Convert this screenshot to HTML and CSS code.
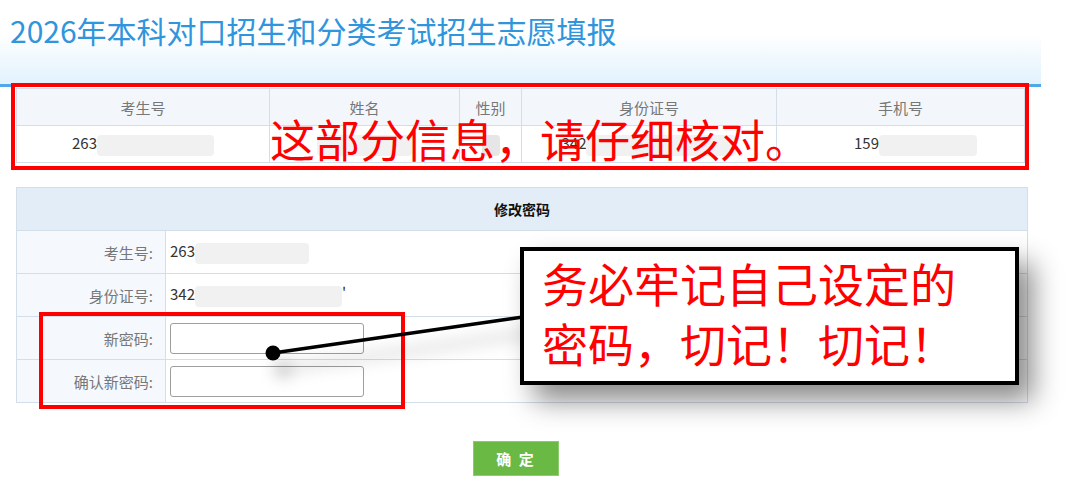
FILE: index.html
```html
<!doctype html>
<html lang="zh-CN">
  <head>
    <meta charset="UTF-8" />
    <title>2026年本科对口招生和分类考试招生志愿填报</title>
    <link rel="stylesheet" href="styles.css">
  </head>
  <body>
    <div class="header">
      <h1 class="title">2026年本科对口招生和分类考试招生志愿填报</h1>
    </div>

    <div class="info">
      <table class="info-table">
        <colgroup>
          <col class="c-no" />
          <col class="c-name" />
          <col class="c-sex" />
          <col class="c-id" />
          <col class="c-tel" />
        </colgroup>
        <tr>
          <th>考生号</th>
          <th>姓名</th>
          <th>性别</th>
          <th>身份证号</th>
          <th>手机号</th>
        </tr>
        <tr>
          <td>263<span class="mask m-no"></span></td>
          <td><span class="mask m-name"></span></td>
          <td><span class="mask m-sex"></span></td>
          <td>342<span class="mask m-id"></span></td>
          <td class="tel-cell">159<span class="mask m-tel"></span></td>
        </tr>
      </table>
    </div>

    <div class="form">
      <table class="form-table">
        <colgroup>
          <col class="c-label" />
          <col />
        </colgroup>
        <tr>
          <th colspan="2">修改密码</th>
        </tr>
        <tr>
          <td class="label">考生号:</td>
          <td class="value">263<span class="mask m-fno"></span></td>
        </tr>
        <tr>
          <td class="label">身份证号:</td>
          <td class="value">342<span class="mask m-fid"></span>'</td>
        </tr>
        <tr>
          <td class="label">新密码:</td>
          <td class="value"><input type="password" class="pwd" /></td>
        </tr>
        <tr>
          <td class="label">确认新密码:</td>
          <td class="value"><input type="password" class="pwd" /></td>
        </tr>
      </table>
      <div class="actions">
        <button class="btn-ok">确 定</button>
      </div>
    </div>

    <!-- annotations drawn over the page -->
    <div class="mark mark-info"></div>
    <div class="note-info">这部分信息，请仔细核对。</div>
    <div class="mark mark-pwd"></div>
    <svg class="pointer" width="1080" height="496" viewBox="0 0 1080 496">
      <line x1="273" y1="353" x2="523" y2="317" stroke="#000" stroke-width="3.5" />
      <circle cx="273" cy="353" r="7.5" fill="#000" />
    </svg>
    <div class="callout">务必牢记自己设定的<br />密码，切记！切记！</div>
  </body>
</html>
```

FILE: styles.css
```css
html,
body {
  margin: 0;
  background: #fff;
}
body {
  position: relative;
  width: 1080px;
  height: 496px;
  overflow: hidden;
  font-family: 'Noto Sans CJK SC', 'Noto Sans', sans-serif;
  color: #333;
}
.header {
  width: 1041px;
  height: 84px;
  background: linear-gradient(#fff 0%, #fff 40%, #e1f2fd 100%);
  border-bottom: 3px solid #4ea8e9;
}
.title {
  margin: 0;
  padding: 11px 0 0 10px;
  font-size: 30px;
  line-height: 38px;
  font-weight: 400;
  color: #2f95dc;
}
.info {
  padding: 1px 0 0 16px;
}
table {
  border-collapse: collapse;
  table-layout: fixed;
}
.info-table {
  width: 1008px;
}
.info-table th,
.info-table td {
  border: 1px solid #d3deeb;
  height: 36px;
  padding: 0;
  text-align: center;
  font-size: 15px;
  white-space: nowrap;
}
.info-table th {
  background: #f3f7fc;
  color: #777;
  font-weight: 400;
}
.info-table td {
  color: #333;
  vertical-align: middle;
}
.c-no { width: 253px; }
.c-name { width: 190px; }
.c-sex { width: 62px; }
.c-id { width: 255px; }
.c-tel { width: 248px; }
.info-table .tel-cell {
  padding-left: 30px;
}
.mask {
  display: inline-block;
  height: 21px;
  vertical-align: middle;
  background: #f1f1f1;
  border-radius: 4px;
}
.m-no { width: 117px; }
.m-name { width: 95px; }
.m-sex { width: 18px; background: #e6e6e6; }
.m-id { width: 150px; }
.m-tel { width: 98px; }
.m-fno { width: 114px; }
.m-fid { width: 147px; }

.form {
  padding: 24px 0 0 16px;
}
.form-table {
  width: 1012px;
}
.c-label { width: 149px; }
.form-table th {
  height: 42px;
  padding: 0;
  background: #e3edf7;
  border: 1px solid #d3deeb;
  font-size: 14px;
  font-weight: 700;
  color: #111;
}
.form-table td {
  height: 42px;
  border: 1px solid #d3deeb;
  padding: 0;
  font-size: 15px;
}
.form-table .label {
  padding-right: 12px;
  background: #f5f8fc;
  text-align: right;
  color: #777;
}
.form-table .value {
  padding-left: 4px;
  color: #333;
}
.pwd {
  display: block;
  width: 194px;
  height: 31px;
  box-sizing: border-box;
  margin: 0;
  border: 1px solid #9e9e9e;
  border-radius: 3px;
  background: #fff;
}
.actions {
  width: 1000px;
  padding-top: 38px;
  display: flex;
  justify-content: center;
}
.btn-ok {
  width: 86px;
  height: 35px;
  border: 1px solid #8dcc6c;
  background: #6bb945;
  color: #fff;
  font-family: inherit;
  font-size: 15px;
  font-weight: 700;
  letter-spacing: 2px;
  cursor: pointer;
}

/* annotations */
.mark {
  position: absolute;
  box-sizing: border-box;
  border: 4px solid #ff0000;
}
.mark-info {
  left: 11px;
  top: 83px;
  width: 1018px;
  height: 87px;
}
.mark-pwd {
  left: 39px;
  top: 312px;
  width: 366px;
  height: 97px;
}
.note-info {
  position: absolute;
  left: 270px;
  top: 114px;
  font-size: 45px;
  line-height: 50px;
  color: #ff0000;
  white-space: nowrap;
}
.pointer {
  position: absolute;
  left: 0;
  top: 0;
  filter: drop-shadow(10px 16px 8px rgba(0, 0, 0, 0.3));
}
.callout {
  position: absolute;
  left: 520px;
  top: 247px;
  width: 499px;
  height: 138px;
  box-sizing: border-box;
  padding: 1px 0 0 18px;
  border: 4px solid #000;
  background: #fff;
  box-shadow: 14px 16px 26px rgba(0, 0, 0, 0.45);
  font-size: 46px;
  line-height: 60px;
  color: #ff0000;
  white-space: nowrap;
}
```
